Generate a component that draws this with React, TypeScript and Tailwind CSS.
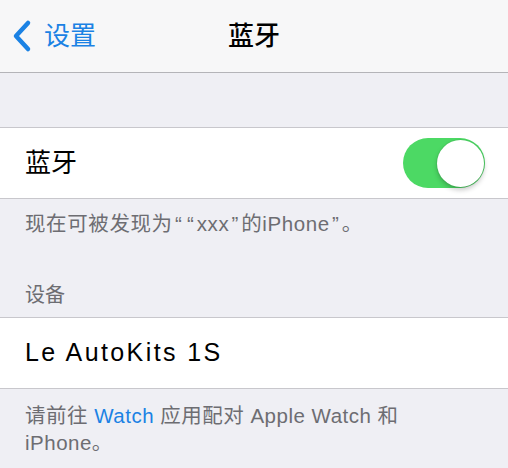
const font = { fontFamily: '"Liberation Sans", "Noto Sans CJK SC", sans-serif' };

function Q({ c }: { c: string }) {
  return <span className="inline-block w-[12px] text-center">{c}</span>;
}

export default function App() {
  return (
    <div className="w-[508px] h-[468px] overflow-hidden bg-[#efeff4]" style={font}>
      {/* nav bar */}
      <div className="relative h-[73px] bg-[#f7f7f8] border-b border-[#b4b4b8] flex items-center">
        <div className="flex items-center text-[#1b82e4] pl-[8px]">
          <svg width="30" height="36" viewBox="0 0 30 36" className="mr-[6px]">
            <path d="M20 5 L8 18 L20 31" fill="none" stroke="currentColor" strokeWidth="4.5" strokeLinecap="round" strokeLinejoin="round" />
          </svg>
          <span className="text-[26px] leading-none">设置</span>
        </div>
        <div className="absolute left-0 right-0 text-center text-[26px] font-medium text-black leading-none pointer-events-none">
          蓝牙
        </div>
      </div>

      {/* spacer */}
      <div className="h-[55px] border-b border-[#c8c7cc]" />

      {/* bluetooth row */}
      <div className="h-[71px] bg-white border-b border-[#c8c7cc] flex items-center justify-between pl-[25px] pr-[23px]">
        <span className="text-[26px] text-black">蓝牙</span>
        <div className="w-[82px] h-[50px] rounded-full bg-[#4cd964] flex items-center justify-end pr-[1px]">
          <div className="w-[47px] h-[47px] rounded-full bg-white shadow-[0_3px_5px_rgba(0,0,0,0.22),0_0_0_1px_rgba(0,0,0,0.05)]" />
        </div>
      </div>

      {/* footer */}
      <div className="pl-[25px] pt-[11px] text-[20.5px] leading-[28px] tracking-[0.6px] text-[#6d6d72]">
        现在可被发现为<Q c="“" /><Q c="“" />xxx<Q c="”" />的iPhone<Q c="”" />。
      </div>

      {/* section header */}
      <div className="pl-[25px] pt-[43px] pb-[8px] text-[20px] leading-[28px] text-[#6d6d72] border-b border-[#c8c7cc]">
        设备
      </div>

      {/* device row */}
      <div className="h-[71px] bg-white border-b border-[#c8c7cc] flex items-center pl-[25px]">
        <span className="text-[25px] tracking-[2.4px] text-black">Le AutoKits 1S</span>
      </div>

      {/* footer */}
      <div className="pl-[25px] pt-[13px] text-[20.5px] leading-[27px] tracking-[0.5px] text-[#6d6d72]">
        请前往 <span className="text-[#1b82e4]">Watch</span> 应用配对 Apple Watch 和
        <br />
        iPhone。
      </div>
    </div>
  );
}
